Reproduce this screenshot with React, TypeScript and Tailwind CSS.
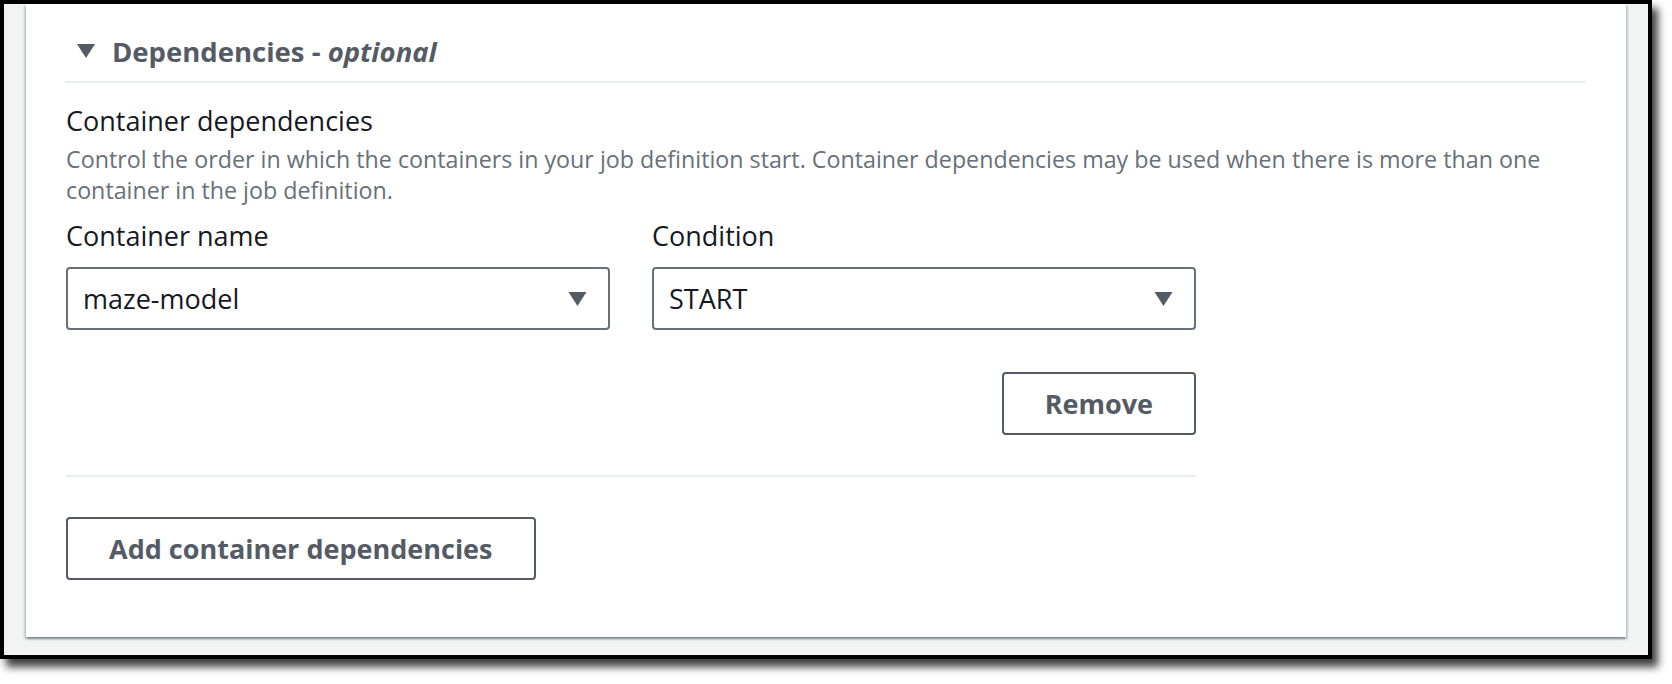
import { ReactNode } from 'react';

function Caret({ className }: { className?: string }) {
  return (
    <svg viewBox="0 0 20 16" className={className} aria-hidden="true">
      <path d="M1 1h18L10 15z" fill="#545b64" />
    </svg>
  );
}

function SelectBox({ value }: { value: string }) {
  return (
    <div className="flex items-center justify-between h-[63px] border-2 border-[#687078] rounded-[4px] bg-white pl-[15px] pr-[20px]">
      <span className="text-[27px] leading-[32px] text-[#16191f]">{value}</span>
      <Caret className="w-[21px] h-[16px]" />
    </div>
  );
}

function Field({ label, children }: { label: string; children: ReactNode }) {
  return (
    <div className="flex flex-col">
      <label className="text-[27px] leading-[32px] text-[#16191f]">{label}</label>
      <div className="mt-[15px]">{children}</div>
    </div>
  );
}

function OutlineButton({ children }: { children: ReactNode }) {
  return (
    <button className="h-[63px] px-[41px] border-2 border-[#545b64] rounded-[4px] bg-white text-[27px] font-bold text-[#545b64] leading-none">
      {children}
    </button>
  );
}

export default function App() {
  return (
    <div className="w-[1672px] h-[684px] bg-white font-['Open_Sans',sans-serif]">
      {/* screenshot frame */}
      <div className="w-[1652px] h-[659px] border-4 border-black bg-[#f2f3f3] flex flex-col shadow-[6px_8px_8px_rgba(0,0,0,0.75)]">
        <section className="flex-1 mx-[22px] mb-[18px] bg-white px-10 pt-[30px] shadow-[0_2px_2px_0_rgba(0,28,36,0.3),2px_2px_2px_0_rgba(0,28,36,0.15),-2px_2px_2px_0_rgba(0,28,36,0.15)]">
          {/* expandable header */}
          <div className="flex items-center h-[36px] pl-[10px]">
            <Caret className="w-[20px] h-[16px] -mt-[2px]" />
            <h2 className="ml-[16px] text-[27.5px] leading-[36px] font-bold text-[#545b64]">
              Dependencies - <em className="italic">optional</em>
            </h2>
          </div>
          <div className="mt-[11px] h-[2px] bg-[#eaeded]" />

          {/* body */}
          <div className="mt-[22px]">
            <div className="text-[27px] leading-[32px] text-[#16191f]">Container dependencies</div>
            <p className="mt-[7px] text-[23.25px] leading-[31px] text-[#687078]">
              Control the order in which the containers in your job definition start. Container dependencies may be used when there is more than one container in the job definition.
            </p>
          </div>

          <div className="w-[1130px] mt-[14px]">
            <div className="grid grid-cols-2 gap-[42px]">
              <Field label="Container name">
                <SelectBox value="maze-model" />
              </Field>
              <Field label="Condition">
                <SelectBox value="START" />
              </Field>
            </div>
            <div className="flex justify-end mt-[42px]">
              <OutlineButton>Remove</OutlineButton>
            </div>
            <div className="mt-[40px] h-[2px] bg-[#eaeded]" />
          </div>

          <div className="mt-[40px]">
            <OutlineButton>Add container dependencies</OutlineButton>
          </div>
        </section>
      </div>
    </div>
  );
}
